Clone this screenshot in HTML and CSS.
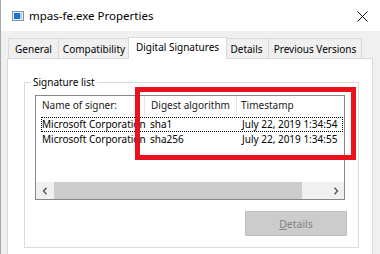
FILE: index.html
```html
<!DOCTYPE html>
<html>
<head>
<meta charset="utf-8">
<link rel="stylesheet" href="styles.css">
</head>
<body>
<div class="window">
  <div class="titlebar">
    <svg class="title-icon" width="12" height="10" viewBox="0 0 12 10">
      <rect x="0.5" y="0.5" width="11" height="9" fill="#e8eef5" stroke="#7f93aa"/>
      <rect x="2" y="2" width="6" height="6" fill="#1c75d6"/>
      <rect x="8" y="2" width="2" height="6" fill="#b9c6d4"/>
    </svg>
    <span class="title-text">mpas-fe.exe Properties</span>
    <svg class="close" width="11" height="11" viewBox="0 0 11 11">
      <path d="M0.5 0.5 L10.5 10.5 M10.5 0.5 L0.5 10.5" stroke="#111" stroke-width="1" fill="none"/>
    </svg>
  </div>
  <div class="body">
    <div class="tabs">
      <div class="tab t-general">General</div>
      <div class="tab t-compat">Compatibility</div>
      <div class="tab tab-active t-sig">Digital Signatures</div>
      <div class="tab t-details">Details</div>
      <div class="tab t-prev">Previous Versions</div>
    </div>
    <div class="page">
      <div class="group">
        <div class="group-label">Signature list</div>
        <div class="list">
          <div class="list-body">
            <div class="list-header">
              <div class="hcell">Name of signer:</div>
              <div class="hcell">Digest algorithm</div>
              <div class="hcell hcell-last">Timestamp</div>
            </div>
            <div class="row row-focus">
              <div class="cell c1">Microsoft Corporation</div>
              <div class="cell c2">sha1</div>
              <div class="cell c3">July 22, 2019 1:34:54</div>
            </div>
            <div class="row">
              <div class="cell c1">Microsoft Corporation</div>
              <div class="cell c2">sha256</div>
              <div class="cell c3">July 22, 2019 1:34:55</div>
            </div>
          </div>
          <div class="hscroll">
            <div class="sbtn">
              <svg width="6" height="8" viewBox="0 0 6 8"><path d="M4.5 0.8 L1.5 4 L4.5 7.2" stroke="#555" stroke-width="1.4" fill="none"/></svg>
            </div>
            <div class="thumb"></div>
            <div class="track"></div>
            <div class="sbtn">
              <svg width="6" height="8" viewBox="0 0 6 8"><path d="M1.5 0.8 L4.5 4 L1.5 7.2" stroke="#555" stroke-width="1.4" fill="none"/></svg>
            </div>
          </div>
        </div>
        <div class="actions">
          <button class="btn" disabled><u>D</u>etails</button>
        </div>
      </div>
    </div>
  </div>
  <div class="highlight"></div>
</div>
</body>
</html>
```
FILE: styles.css
```css
html, body {
  margin: 0;
  padding: 0;
}
body {
  width: 380px;
  height: 254px;
  overflow: hidden;
  background: #f0f0f0;
  font-family: "Noto Sans", "Open Sans", sans-serif;
  font-size: 10px;
  color: #000;
}
.window {
  position: relative;
  height: 254px;
  border-left: 1px solid #a8a8a8;
  box-sizing: border-box;
}
.titlebar {
  height: 31px;
  background: #fff;
  display: flex;
  align-items: center;
  padding-left: 11px;
  padding-right: 12px;
  box-sizing: border-box;
}
.title-icon {
  margin-right: 5px;
  margin-top: 1px;
}
.title-text {
  font-size: 11.5px;
  color: #000;
  line-height: 16px;
}
.close {
  margin-left: auto;
  margin-top: 1px;
}
.body {
  padding: 6px 0 0 6px;
}
.tabs {
  display: flex;
  align-items: flex-end;
  height: 21px;
  padding-left: 1px;
  position: relative;
  z-index: 2;
}
.tab {
  height: 20px;
  box-sizing: border-box;
  border: 1px solid #d9d9d9;
  border-bottom: none;
  background: #f0f0f0;
  margin-left: -1px;
  text-align: center;
  line-height: 19px;
  padding-top: 1px;
  white-space: nowrap;
}
.tab-active {
  height: 22px;
  background: #fff;
  margin-left: -2px;
  margin-right: -2px;
  margin-bottom: -1px;
  line-height: 18px;
  padding-top: 0;
  position: relative;
  z-index: 3;
}
.t-general { width: 51px; margin-left: 0; }
.t-compat { width: 72px; }
.t-sig { width: 99px; }
.t-details { width: 45px; }
.t-prev { width: 94px; }
.page {
  width: 366px;
  height: 200px;
  box-sizing: border-box;
  border: 1px solid #d9d9d9;
  background: #fff;
  padding: 23px 13px 0 16px;
}
.group {
  height: 166px;
  box-sizing: border-box;
  border: 1px solid #dcdcdc;
}
.group-label {
  width: max-content;
  margin: -8px 0 0 6px;
  padding: 0 2px;
  background: #fff;
  line-height: 14px;
}
.list {
  margin: 6px 0 0 10px;
  width: 310px;
  height: 105px;
  box-sizing: border-box;
  border: 1px solid #828790;
  display: flex;
  flex-direction: column;
}
.list-body {
  flex: 1;
  overflow: hidden;
}
.list-header {
  display: grid;
  grid-template-columns: 109px 92px 1fr;
  height: 19px;
  margin-bottom: 2px;
}
.hcell {
  border-right: 1px solid #e5e5e5;
  line-height: 19px;
  padding-left: 6px;
  white-space: nowrap;
  overflow: hidden;
  color: #222;
}
.hcell-last { border-right: none; padding-left: 4px; }
.row {
  display: grid;
  grid-template-columns: 104px 92px 1fr;
  height: 15px;
  margin: 0 1px 0 5px;
  box-sizing: border-box;
  border: 1px dotted transparent;
}
.row-focus {
  border-color: #000;
}
.cell {
  line-height: 13px;
  white-space: nowrap;
  overflow: hidden;
}
.c1 { padding-left: 0; }
.c2 { padding-left: 4px; }
.c3 { padding-left: 4px; }
.hscroll {
  height: 17px;
  display: flex;
  background: #f0f0f0;
}
.sbtn {
  width: 17px;
  height: 17px;
  display: flex;
  align-items: center;
  justify-content: center;
}
.thumb {
  width: 248px;
  background: #cdcdcd;
  margin-left: 1px;
}
.track {
  flex: 1;
}
.actions {
  display: flex;
  justify-content: flex-end;
  margin: 11px 11px 0 0;
}
.btn {
  width: 102px;
  height: 25px;
  background: #cccccc;
  border: 1px solid #bfbfbf;
  color: #838383;
  font-family: inherit;
  font-size: 10.5px;
  padding: 0;
  margin: 0;
}
.highlight {
  position: absolute;
  left: 134px;
  top: 87px;
  width: 221px;
  height: 73px;
  box-sizing: border-box;
  border: 5px solid #e8111d;
}
```
